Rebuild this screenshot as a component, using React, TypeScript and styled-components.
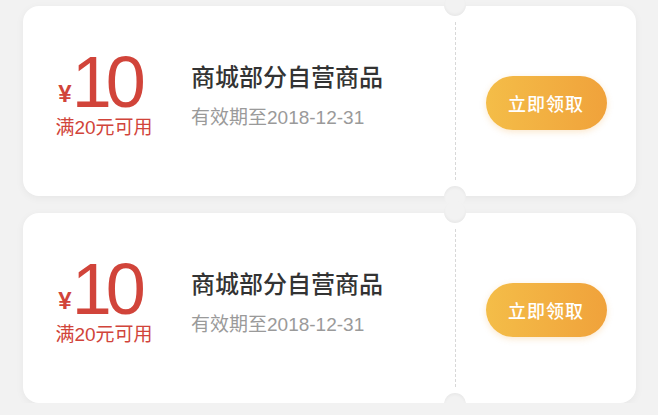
import styled, { createGlobalStyle } from "styled-components";

const GlobalStyle = createGlobalStyle`
  html, body {
    margin: 0;
    padding: 0;
    background: #f2f2f2;
  }
  body {
    font-family: "Liberation Sans", "Noto Sans CJK SC", sans-serif;
  }
`;

const List = styled.div`
  display: flex;
  flex-direction: column;
  gap: 17px;
  padding: 6px 22px 0 23px;
`;

const Card = styled.div`
  display: flex;
  height: 190px;
  background: #fff;
  border-radius: 16px;
  box-shadow: 0 2px 8px rgba(0, 0, 0, 0.05);
`;

const Main = styled.div`
  flex: 1;
  display: flex;
  align-items: center;
  padding: 0 0 10px 32px;
`;

const Price = styled.div`
  width: 98px;
  display: flex;
  flex-direction: column;
  align-items: center;
  color: #d1443a;
`;

const Amount = styled.div`
  display: flex;
  align-items: flex-end;
`;

const Currency = styled.span`
  font-size: 24px;
  line-height: 24px;
  font-weight: 700;
  margin-bottom: 6px;
`;

const Value = styled.span`
  font-size: 72px;
  line-height: 60px;
  letter-spacing: -6px;
  margin-right: 10px;
`;

const Condition = styled.div`
  margin-top: 4px;
  font-size: 19px;
  line-height: 24px;
`;

const Info = styled.div`
  margin-left: 38px;
  display: flex;
  flex-direction: column;
  gap: 15px;
`;

const Title = styled.div`
  font-size: 24px;
  line-height: 28px;
  font-weight: 500;
  color: #333;
`;

const Expire = styled.div`
  font-size: 19px;
  line-height: 22px;
  color: #9a9a9a;
`;

const Divider = styled.div`
  position: relative;
  margin: 16px 0;
  border-left: 1px dashed #d8d8d8;

  &::before,
  &::after {
    content: "";
    position: absolute;
    left: -12px;
    width: 22px;
    height: 22px;
    border-radius: 50%;
    background: #f2f2f2;
  }
  &::before {
    top: -28px;
    box-shadow: inset 0 -2px 3px rgba(0, 0, 0, 0.04);
  }
  &::after {
    bottom: -28px;
    box-shadow: inset 0 2px 3px rgba(0, 0, 0, 0.04);
  }
`;

const Stub = styled.div`
  width: 180px;
  display: flex;
  align-items: center;
  justify-content: center;
  padding-top: 4px;
`;

const Button = styled.button`
  width: 121px;
  height: 54px;
  border: none;
  border-radius: 27px;
  background: linear-gradient(90deg, #f4bd48, #f0a23b);
  box-shadow: 0 2px 6px rgba(240, 165, 60, 0.25);
  color: #fff;
  font-family: "Noto Sans CJK SC", sans-serif;
  font-size: 18px;
  font-weight: 500;
  letter-spacing: 1px;
`;

const coupons = [
  { id: 1, value: 10, min: 20, title: "商城部分自营商品", date: "2018-12-31" },
  { id: 2, value: 10, min: 20, title: "商城部分自营商品", date: "2018-12-31" },
];

export default function App() {
  return (
    <>
      <GlobalStyle />
      <List>
        {coupons.map((c) => (
          <Card key={c.id}>
            <Main>
              <Price>
                <Amount>
                  <Currency>¥</Currency>
                  <Value>{c.value}</Value>
                </Amount>
                <Condition>满{c.min}元可用</Condition>
              </Price>
              <Info>
                <Title>{c.title}</Title>
                <Expire>有效期至{c.date}</Expire>
              </Info>
            </Main>
            <Divider />
            <Stub>
              <Button>立即领取</Button>
            </Stub>
          </Card>
        ))}
      </List>
    </>
  );
}
